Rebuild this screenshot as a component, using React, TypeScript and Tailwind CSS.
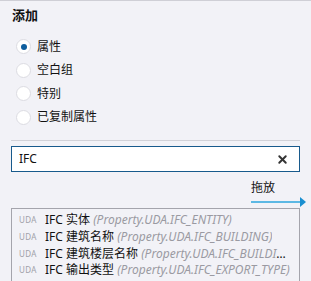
import { X } from 'lucide-react'

const options = ['属性', '空白组', '特别', '已复制属性']

const items = [
  { name: 'IFC 实体', prop: '(Property.UDA.IFC_ENTITY)' },
  { name: 'IFC 建筑名称', prop: '(Property.UDA.IFC_BUILDING)' },
  { name: 'IFC 建筑楼层名称', prop: '(Property.UDA.IFC_BUILDING_STOREY)' },
  { name: 'IFC 输出类型', prop: '(Property.UDA.IFC_EXPORT_TYPE)' },
]

export default function App() {
  return (
    <div
      className="w-[311px] h-[281px] overflow-hidden bg-[#f2f2f7] border-t border-[#cfcfd6] text-[#111] flex flex-col"
      style={{ fontFamily: '"Segoe UI", "Noto Sans", "Noto Sans CJK SC", sans-serif' }}
    >
      {/* Header */}
      <div className="px-3 pt-[5px] text-[13px] font-bold leading-[18px]">添加</div>

      {/* Radio options */}
      <div className="flex flex-col pl-4 pt-[11px]">
        {options.map((opt, i) => (
          <div key={opt} className="flex items-center h-[23.5px] gap-[6px]">
            <span className="w-[15px] h-[15px] rounded-full bg-white border border-[#dcdce2] flex items-center justify-center">
              {i === 0 && <span className="w-[6px] h-[6px] rounded-full bg-[#0e5e9e]" />}
            </span>
            <span className="text-[12px] leading-none">{opt}</span>
          </div>
        ))}
      </div>

      {/* Divider */}
      <div className="mx-[11px] mt-[11px] h-px bg-[#d2d2d8]" />

      {/* Search */}
      <div className="mx-[11px] mt-[5px] h-[26px] border border-[#185a8c] bg-white flex items-center pl-[7px] pr-[10px]">
        <span className="flex-1 text-[12px]">IFC</span>
        <X size={13} strokeWidth={3.5} className="text-[#333]" />
      </div>

      {/* Drag hint */}
      <div className="flex justify-end pr-[5px] mt-[8px]">
        <div className="w-[55px] flex flex-col">
          <span className="text-[12px] leading-[16px]">拖放</span>
          <svg width="55" height="10" viewBox="0 0 55 10" className="mt-[1px]">
            <line x1="0" y1="5" x2="50" y2="5" stroke="#5cb8e4" strokeWidth="2" />
            <polygon points="49,0 55,5 49,10" fill="#1a8fd0" />
          </svg>
        </div>
      </div>

      {/* List */}
      <div className="mx-[11px] mt-[1px] flex-1 border border-b-0 border-[#a4a4ac] bg-[#f2f2f7] pt-[3px]">
        {items.map(it => (
          <div key={it.name} className="flex items-center h-[16.7px] pl-[7px] pr-[5px] whitespace-nowrap">
            <span className="w-[26px] shrink-0 text-[8px] text-[#a0a0a8] tracking-[0.3px]">UDA</span>
            <span className="min-w-0 text-[12px] overflow-hidden text-ellipsis">
              {it.name} <span className="italic text-[#9a9aa2]">{it.prop}</span>
            </span>
          </div>
        ))}
      </div>
    </div>
  )
}
